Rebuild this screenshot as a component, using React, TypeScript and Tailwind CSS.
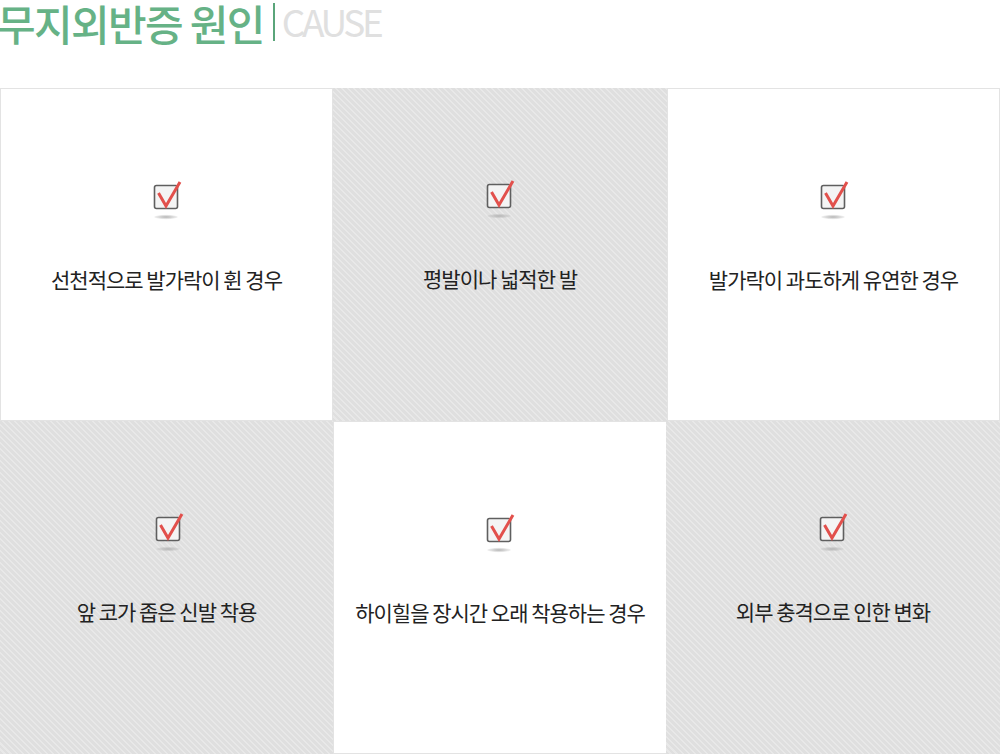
import React from 'react';

const causes = [
  { text: '선천적으로 발가락이 휜 경우', shaded: false },
  { text: '평발이나 넓적한 발', shaded: true },
  { text: '발가락이 과도하게 유연한 경우', shaded: false },
  { text: '앞 코가 좁은 신발 착용', shaded: true, iconNudge: true },
  { text: '하이힐을 장시간 오래 착용하는 경우', shaded: false },
  { text: '외부 충격으로 인한 변화', shaded: true, overlap: true },
];

const CheckIcon = () => (
  <svg width="30" height="40" viewBox="0 0 30 40" fill="none">
    <defs>
      <radialGradient id="shadow">
        <stop offset="0%" stopColor="#b4b4b4" />
        <stop offset="100%" stopColor="#b4b4b4" stopOpacity="0.15" />
      </radialGradient>
    </defs>
    <rect x="2.5" y="5.5" width="23" height="23" rx="2" fill="#f4f4f4" stroke="#5f5f5f" strokeWidth="1.6" />
    <path d="M6.5 13 L14 26 L28 2" stroke="#e2504c" strokeWidth="3" />
    <ellipse cx="14" cy="37" rx="12" ry="2.2" fill="url(#shadow)" />
  </svg>
);

export default function App() {
  return (
    <div className="w-[1000px] h-[754px] bg-white overflow-hidden font-['Noto_Sans_CJK_KR',sans-serif]">
      <div className="h-[88px] flex items-start -ml-[3px]">
        <h1 className="text-[42px] leading-[46px] font-medium tracking-[-1.65px] text-[#66b286] whitespace-nowrap">무지외반증 원인</h1>
        <div className="w-[2px] h-[38px] mt-[3px] ml-[9px] bg-[#5aa57a]" />
        <span className="ml-[7px] text-[37px] leading-[42px] font-normal tracking-[-3.4px] text-[#e0e0e0]">CAUSE</span>
      </div>
      <div className="grid grid-cols-[333px_334px_333px] grid-rows-[333px_333px]">
        {causes.map((c) => (
          <div
            key={c.text}
            className={
              c.shaded
                ? `flex flex-col items-center pt-[91px] bg-[repeating-linear-gradient(45deg,#dfdfdf_0,#dfdfdf_2.828px,#e8e8e8_2.828px,#e8e8e8_4.243px)] ${c.overlap ? '-ml-[1px]' : ''}`
                : 'flex flex-col items-center pt-[91px] bg-white border border-[#e3e3e3]'
            }
          >
            <div className={c.iconNudge ? 'ml-[4px] h-[40px]' : 'h-[40px]'}>
              <CheckIcon />
            </div>
            <p className="mt-[43px] text-[21px] leading-[32px] tracking-[-1px] text-[#222222] whitespace-nowrap">{c.text}</p>
          </div>
        ))}
      </div>
    </div>
  );
}
